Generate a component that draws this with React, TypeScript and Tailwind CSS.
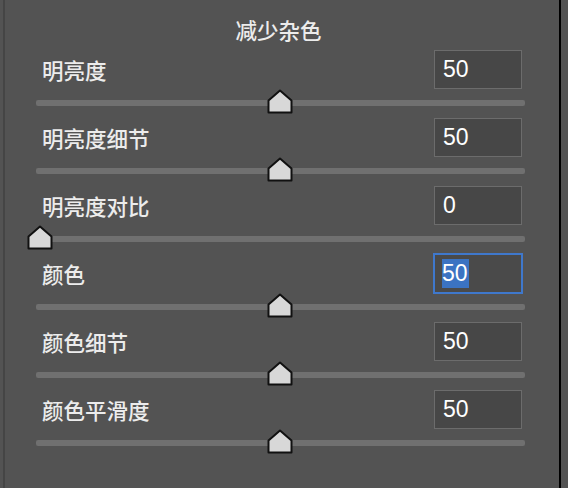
import React from 'react';

const rows = [
  { label: '明亮度', value: 50 },
  { label: '明亮度细节', value: 50 },
  { label: '明亮度对比', value: 0 },
  { label: '颜色', value: 50, focused: true },
  { label: '颜色细节', value: 50 },
  { label: '颜色平滑度', value: 50 },
];

const cjk = "font-['PingFang_SC','Noto_Sans_CJK_SC',sans-serif]";
const num = "font-['Liberation_Sans','Noto_Sans',sans-serif]";

function Thumb({ value }: { value: number }) {
  // track starts 4px before value 0, 4.8px per step, thumb 28px wide
  const left = value * 4.8 - 10;
  return (
    <svg
      className="absolute top-0"
      style={{ left }}
      width="28"
      height="25"
      viewBox="0 0 28 25"
    >
      <path
        d="M2.5 23.5 V11.5 L14 1.5 L25.5 11.5 V23.5 Z"
        fill="#d8d8d8"
        stroke="#111"
        strokeWidth="2"
        strokeLinejoin="round"
      />
    </svg>
  );
}

function SliderRow({ label, value, focused }: { label: string; value: number; focused?: boolean }) {
  return (
    <div className="flex flex-col">
      <div className="flex h-[39px] items-center justify-between pl-[6px] pr-[3px]">
        <span className={`${cjk} text-[21.5px] font-medium leading-none text-[#ececec]`}>{label}</span>
        {focused ? (
          <div className="flex h-[41px] w-[90px] items-center border-2 border-[#3f78cc] bg-[#4a4a4a] pl-[7px] -mr-[1px]">
            <span className={`${num} bg-[#3b73c2] pr-[1px] text-[23px] leading-[29px] text-white`}>{value}</span>
          </div>
        ) : (
          <div className="flex h-[39px] w-[88px] items-center border-[1.5px] border-[#6c6c6c] bg-[#474747] pl-[8px]">
            <span className={`${num} text-[23px] leading-none text-white`}>{value}</span>
          </div>
        )}
      </div>
      <div className="relative h-[29px]">
        <div className="mt-[11px] h-[6px] w-[489px] rounded-[2px] bg-[#707070]" />
        <Thumb value={value} />
      </div>
    </div>
  );
}

export default function App() {
  return (
    <div className="flex h-[488px] w-[568px] bg-[#535353]">
      <div className="ml-[3px] h-full w-[558px] border-l-2 border-r-2 border-l-[#454545] border-r-black">
        <div className="ml-[31px] w-[489px]">
          <div className={`${cjk} h-[50px] pt-[18px] text-center text-[21.5px] font-medium leading-[24px] text-[#ececec]`}>
            <span className="relative -left-[2px]">减少杂色</span>
          </div>
          {rows.map((r) => (
            <SliderRow key={r.label} label={r.label} value={r.value} focused={r.focused} />
          ))}
        </div>
      </div>
    </div>
  );
}
